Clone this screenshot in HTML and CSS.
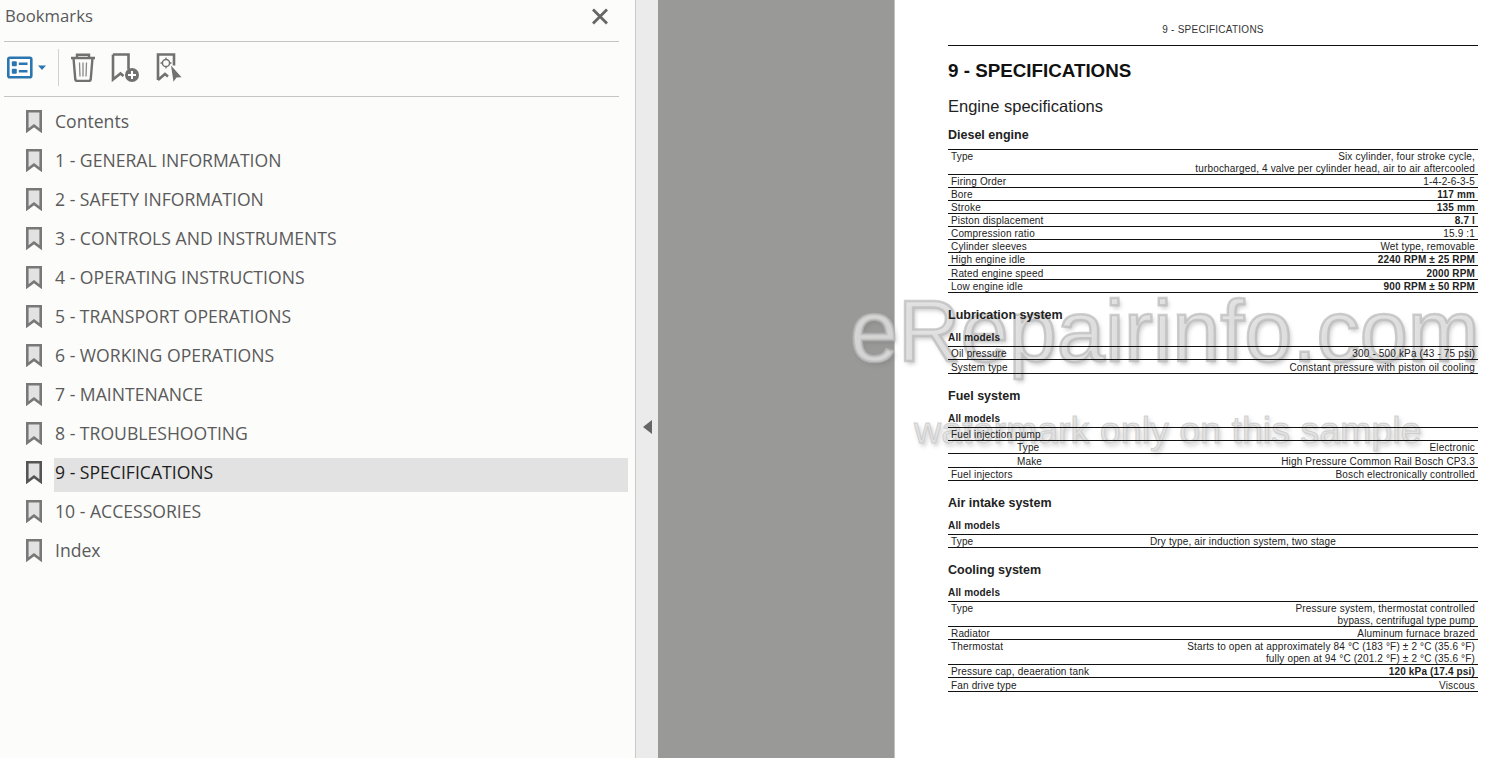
FILE: index.html
```html
<!DOCTYPE html>
<html lang="en">
<head>
  <meta charset="UTF-8">
  <title>Bookmarks - 9 - SPECIFICATIONS</title>
  <link rel="stylesheet" href="styles.css">
</head>
<body>
  <svg class="defs" width="0" height="0">
    <symbol id="ribbon" viewBox="0 0 16 23">
      <path d="M1.300 1.300h13.400v19.400l-6.700-5-6.700 5z" fill="#e2e2e2" stroke="currentColor" stroke-width="2.600"/>
    </symbol>
  </svg>

  <aside class="sidebar">
    <header class="sidebar-head">
      <span class="sidebar-title">Bookmarks</span>
      <svg class="close" width="18" height="17" viewBox="0 0 18 17"><path d="M2 1.500l14 14M16 1.500l-14 14" stroke="#666" stroke-width="2.800" fill="none"/></svg>
    </header>
    <div class="toolbar">
      <svg width="40" height="24" viewBox="0 0 40 24">
        <rect x="1.300" y="1.700" width="23" height="19.600" rx="1.500" fill="#fff" stroke="#2b76ae" stroke-width="2.600"/>
        <rect x="4.800" y="5.300" width="5" height="5" rx="1" fill="#2b76ae"/>
        <rect x="4.800" y="12.700" width="5" height="5" rx="1" fill="#2b76ae"/>
        <path d="M11.800 7.800h8.700M11.800 15.200h8.700" stroke="#2b76ae" stroke-width="2.600"/>
        <path d="M31 9.500h8l-4 4.500z" fill="#2b76ae"/>
      </svg>
      <span class="toolbar-sep"></span>
      <svg class="tool-trash" width="26" height="29" viewBox="0 0 26 29">
        <path d="M1 5h24M7 5V1.800h12V5M3.500 5l1.800 21.500q.2 1.400 1.600 1.400h12.200q1.400 0 1.600-1.400L22.500 5" fill="none" stroke="#717171" stroke-width="2.400"/>
        <path d="M9.500 9.500l.5 14M13 9.500v14M16.500 9.500l-.5 14" fill="none" stroke="#888" stroke-width="1.300"/>
      </svg>
      <svg class="tool-add" width="29" height="29" viewBox="0 0 29 29">
        <path d="M2 1.500h15.500v15M2 1.500v25l7.500-6 3 2.400" fill="none" stroke="#717171" stroke-width="2.600"/>
        <circle cx="21" cy="22" r="7" fill="#717171"/>
        <path d="M21 18v8M17 22h8" stroke="#fff" stroke-width="2"/>
      </svg>
      <svg class="tool-dest" width="26" height="29" viewBox="0 0 26 29">
        <path d="M2 27V1.500h16v11M2 27l7-6 3 2.400" fill="none" stroke="#717171" stroke-width="2.600"/>
        <circle cx="10" cy="10" r="3.600" fill="none" stroke="#717171" stroke-width="1.500"/>
        <path d="M10 4.500v2.500M10 13v2.500M4.500 10H7M13 10h2.500" stroke="#717171" stroke-width="1.300"/>
        <path d="M15 12.500l10.500 11.700-5 .3-3 4.300z" fill="#717171"/>
      </svg>
    </div>
    <ul class="bookmarks">
      <li class="bookmark"><svg class="ribbon"><use href="#ribbon"/></svg><span class="bookmark-label">Contents</span></li>
      <li class="bookmark"><svg class="ribbon"><use href="#ribbon"/></svg><span class="bookmark-label">1 - GENERAL INFORMATION</span></li>
      <li class="bookmark"><svg class="ribbon"><use href="#ribbon"/></svg><span class="bookmark-label">2 - SAFETY INFORMATION</span></li>
      <li class="bookmark"><svg class="ribbon"><use href="#ribbon"/></svg><span class="bookmark-label">3 - CONTROLS AND INSTRUMENTS</span></li>
      <li class="bookmark"><svg class="ribbon"><use href="#ribbon"/></svg><span class="bookmark-label">4 - OPERATING INSTRUCTIONS</span></li>
      <li class="bookmark"><svg class="ribbon"><use href="#ribbon"/></svg><span class="bookmark-label">5 - TRANSPORT OPERATIONS</span></li>
      <li class="bookmark"><svg class="ribbon"><use href="#ribbon"/></svg><span class="bookmark-label">6 - WORKING OPERATIONS</span></li>
      <li class="bookmark"><svg class="ribbon"><use href="#ribbon"/></svg><span class="bookmark-label">7 - MAINTENANCE</span></li>
      <li class="bookmark"><svg class="ribbon"><use href="#ribbon"/></svg><span class="bookmark-label">8 - TROUBLESHOOTING</span></li>
      <li class="bookmark selected"><svg class="ribbon"><use href="#ribbon"/></svg><span class="bookmark-label">9 - SPECIFICATIONS</span></li>
      <li class="bookmark"><svg class="ribbon"><use href="#ribbon"/></svg><span class="bookmark-label">10 - ACCESSORIES</span></li>
      <li class="bookmark"><svg class="ribbon"><use href="#ribbon"/></svg><span class="bookmark-label">Index</span></li>
    </ul>
  </aside>

  <div class="gutter"><span class="collapse"></span></div>
  <div class="canvas"></div>

  <div class="watermark watermark-big">eRepairinfo.com</div>
  <div class="watermark watermark-small">watermark only on this sample</div>

  <main class="page">
    <div class="running-head">9 - SPECIFICATIONS</div>
    <h1>9 - SPECIFICATIONS</h1>
    <h2>Engine specifications</h2>
    <section class="first">
      <h3>Diesel engine</h3>
      <div class="spec spec-noband">
        <div class="row r25"><span>Type</span><span class="val">Six cylinder, four stroke cycle,<br>turbocharged, 4 valve per cylinder head, air to air aftercooled</span></div>
        <div class="row"><span>Firing Order</span><span class="val">1-4-2-6-3-5</span></div>
        <div class="row"><span>Bore</span><b>117 mm</b></div>
        <div class="row"><span>Stroke</span><b>135 mm</b></div>
        <div class="row"><span>Piston displacement</span><b>8.7 l</b></div>
        <div class="row"><span>Compression ratio</span><span class="val">15.9 :1</span></div>
        <div class="row"><span>Cylinder sleeves</span><span class="val">Wet type, removable</span></div>
        <div class="row"><span>High engine idle</span><b>2240 RPM ± 25 RPM</b></div>
        <div class="row r14"><span>Rated engine speed</span><b>2000 RPM</b></div>
        <div class="row"><span>Low engine idle</span><b>900 RPM ± 50 RPM</b></div>
      </div>
    </section>
    <section>
      <h3>Lubrication system</h3>
      <h4>All models</h4>
      <div class="spec">
        <div class="row"><span>Oil pressure</span><span class="val">300 - 500 kPa (43 - 75 psi)</span></div>
        <div class="row r14"><span>System type</span><span class="val">Constant pressure with piston oil cooling</span></div>
      </div>
    </section>
    <section>
      <h3>Fuel system</h3>
      <h4>All models</h4>
      <div class="spec">
        <div class="row"><span>Fuel injection pump</span></div>
        <div class="row sub"><span>Type</span><span class="val">Electronic</span></div>
        <div class="row sub r14"><span>Make</span><span class="val">High Pressure Common Rail Bosch CP3.3</span></div>
        <div class="row"><span>Fuel injectors</span><span class="val">Bosch electronically controlled</span></div>
      </div>
    </section>
    <section>
      <h3>Air intake system</h3>
      <h4>All models</h4>
      <div class="spec">
        <div class="row"><span>Type</span><span class="val mid">Dry type, air induction system, two stage</span></div>
      </div>
    </section>
    <section>
      <h3>Cooling system</h3>
      <h4>All models</h4>
      <div class="spec">
        <div class="row r25"><span>Type</span><span class="val">Pressure system, thermostat controlled<br>bypass, centrifugal type pump</span></div>
        <div class="row"><span>Radiator</span><span class="val">Aluminum furnace brazed</span></div>
        <div class="row r25"><span>Thermostat</span><span class="val">Starts to open at approximately 84 °C (183 °F) ± 2 °C (35.6 °F)<br>fully open at 94 °C (201.2 °F) ± 2 °C (35.6 °F)</span></div>
        <div class="row"><span>Pressure cap, deaeration tank</span><b>120 kPa (17.4 psi)</b></div>
        <div class="row r14"><span>Fan drive type</span><span class="val">Viscous</span></div>
      </div>
    </section>
  </main>
</body>
</html>
```
FILE: styles.css
```css
* {
  box-sizing: border-box;
}

html, body {
  height: 100%;
}

body {
  margin: 0;
  display: flex;
  overflow: hidden;
  background-color: #fff;
  font-family: 'Liberation Sans', Arial, sans-serif;
}

.defs {
  position: absolute;
}

/* bookmarks panel */
.sidebar {
  flex: 0 0 636px;
  background-color: #fcfcfb;
  border-right: 1px solid #c9c9c9;
  font-family: 'Open Sans', sans-serif;
}

.sidebar-head {
  display: flex;
  justify-content: space-between;
  align-items: center;
  height: 42px;
  margin: 0 16px 0 4px;
  padding: 0 10px 11px 1px;
  border-bottom: 1px solid #c4c4c4;
}

.sidebar-title {
  font-size: 16.700px;
  color: #595959;
}

.close {
  margin-top: 3px;
}

.toolbar {
  display: flex;
  align-items: center;
  height: 55px;
  margin: 0 16px 0 4px;
  padding: 0 0 3px 3px;
  border-bottom: 1px solid #c4c4c4;
}

.toolbar-sep {
  width: 1px;
  height: 37px;
  margin: 0 11px;
  background-color: #d2d2d2;
}

.tool-add {
  margin-left: 15px;
}

.tool-dest {
  margin-left: 16px;
}

.bookmarks {
  margin: 0;
  padding: 5px 7px 0 27px;
  list-style: none;
}

.bookmark {
  display: flex;
  height: 39px;
  color: #5a5a5a;
}

.ribbon {
  flex: none;
  width: 16px;
  height: 23px;
  margin: 8px 11px 0 -1px;
  color: #787878;
}

.bookmark-label {
  flex: 1;
  height: 34px;
  margin: 5px 0 0 1px;
  padding-left: 1px;
  font-size: 17.600px;
  line-height: 28px;
}

.bookmark.selected .bookmark-label {
  background-color: #e2e2e2;
  color: #1d1d1d;
}

.bookmark.selected .ribbon {
  color: #555;
}

/* gutter and empty viewer area */
.gutter {
  flex: 0 0 22px;
  padding: 420px 0 0 7px;
  background-color: #ebebeb;
}

.collapse {
  display: block;
  width: 0;
  height: 0;
  border-top: 7px solid transparent;
  border-bottom: 7px solid transparent;
  border-right: 9px solid #666;
}

.canvas {
  flex: 0 0 237px;
  background-color: #999998;
  border-right: 1px solid #c2c2c2;
}

/* manual page */
.page {
  position: relative;
  z-index: 1;
  flex: 1;
  padding: 0 11px 0 53px;
  color: #111;
}

.running-head {
  height: 46px;
  padding-top: 24px;
  border-bottom: 1px solid #111;
  font-size: 10px;
  letter-spacing: .25px;
  line-height: 12px;
  text-align: center;
  color: #333;
}

h1 {
  margin: 14px 0 0;
  font-size: 18.800px;
  line-height: 22px;
}

h2 {
  margin: 14px 0 0;
  font-size: 16.500px;
  font-weight: normal;
  line-height: 20px;
  color: #222;
}

h3 {
  margin: 0;
  font-size: 12.500px;
  line-height: 16px;
  color: #222;
}

h4 {
  margin: 8px 0 0;
  font-size: 10px;
  letter-spacing: .16px;
  line-height: 14px;
  color: #222;
}

section {
  margin-top: 14px;
}

section.first {
  margin-top: 11px;
}

.spec {
  margin-top: 1px;
  border-top: 1px solid #111;
  font-size: 10px;
  letter-spacing: .16px;
  line-height: 12px;
  color: #222;
}

.spec-noband {
  margin-top: 6px;
}

.row {
  display: flex;
  justify-content: space-between;
  height: 13px;
  padding: 1px 3px 0;
  border-bottom: 1px solid #111;
}

.row.r14 {
  height: 14px;
  padding-top: 2px;
}

.row.r25 {
  height: 25px;
}

.row.sub {
  padding-left: 69px;
}

.val {
  text-align: right;
}

.val.mid {
  margin-right: 139px;
}

/* sample stamp, sits under the page text */
.watermark {
  position: absolute;
  white-space: nowrap;
  color: rgba(225, 225, 225, 0.85);
  text-shadow: 2px 3px 4px rgba(120, 120, 120, 0.4);
}

.watermark-big {
  top: 281px;
  left: 850px;
  font-size: 86.500px;
  line-height: 100px;
  -webkit-text-stroke: 2.500px rgba(185, 185, 185, 0.7);
}

.watermark-small {
  top: 408px;
  left: 914px;
  font-size: 37.600px;
  line-height: 44px;
  -webkit-text-stroke: 1px rgba(195, 195, 195, 0.7);
}
```
